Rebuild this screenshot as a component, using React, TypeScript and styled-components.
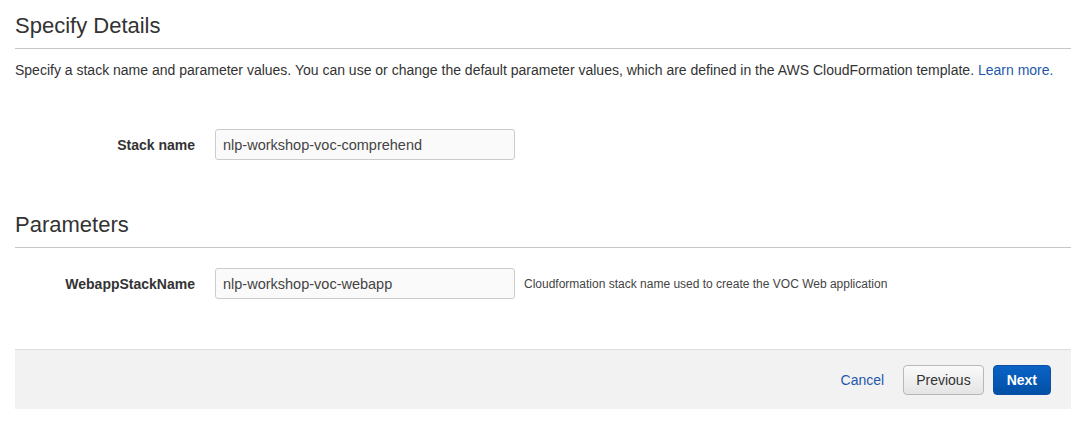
import React from "react";
import styled, { createGlobalStyle } from "styled-components";

const Global = createGlobalStyle`
  html, body { margin: 0; padding: 0; background: #fff; }
  body { font-family: "Liberation Sans", Arial, Helvetica, sans-serif; color: #333; }
`;

const Page = styled.div`
  padding: 0 14px 0 15px;
  display: flex;
  flex-direction: column;
`;

const SectionTitle = styled.h2<{ $top: number }>`
  margin: ${(p) => p.$top}px 0 0;
  padding: 0 0 9px;
  font-size: 22px;
  line-height: 26px;
  font-weight: normal;
  color: #333;
  border-bottom: 1px solid #c6c6c6;
`;

const Description = styled.p`
  margin: 12px 0 0;
  font-size: 14px;
  line-height: 18px;
  color: #333;
`;

const Link = styled.a`
  color: #1f58ad;
  text-decoration: none;
  cursor: pointer;
`;

const FieldRow = styled.div<{ $top: number }>`
  display: flex;
  align-items: center;
  margin-top: ${(p) => p.$top}px;
`;

const Label = styled.label`
  width: 180px;
  padding-right: 20px;
  text-align: right;
  font-size: 14px;
  font-weight: bold;
  color: #333;
`;

const Input = styled.input`
  box-sizing: border-box;
  width: 300px;
  height: 31px;
  padding: 0 7px;
  border: 1px solid #ccc;
  border-radius: 3px;
  background: #fafafa;
  font-family: "Liberation Sans", Arial, sans-serif;
  font-size: 14.5px;
  color: #444;
  outline: none;
`;

const Help = styled.span`
  margin-left: 9px;
  font-size: 12px;
  color: #444;
`;

const Footer = styled.div`
  margin-top: 50px;
  height: 59px;
  border-top: 1px solid #ddd;
  background: #f2f2f2;
  display: flex;
  align-items: center;
  justify-content: flex-end;
  padding-right: 20px;
`;

const CancelLink = styled(Link)`
  font-size: 14px;
  margin-right: 19px;
`;

const Button = styled.button<{ $primary?: boolean }>`
  box-sizing: border-box;
  height: 30px;
  padding: 0 ${(p) => (p.$primary ? "13px" : "12px")};
  margin-left: ${(p) => (p.$primary ? "9px" : "0")};
  border-radius: 4px;
  font-family: "Liberation Sans", Arial, sans-serif;
  font-size: 14px;
  font-weight: ${(p) => (p.$primary ? "bold" : "normal")};
  color: ${(p) => (p.$primary ? "#fff" : "#333")};
  border: 1px solid ${(p) => (p.$primary ? "#0a4fa3" : "#b8b8b8")};
  background: ${(p) =>
    p.$primary
      ? "linear-gradient(#0b63c6, #0250a6)"
      : "linear-gradient(#fafafa, #e4e4e4)"};
  cursor: pointer;
`;

export default function App() {
  return (
    <>
      <Global />
      <Page>
        <SectionTitle $top={13}>Specify Details</SectionTitle>
        <Description>
          Specify a stack name and parameter values. You can use or change the default parameter
          values, which are defined in the AWS CloudFormation template. <Link>Learn more.</Link>
        </Description>
        <FieldRow $top={50}>
          <Label>Stack name</Label>
          <Input defaultValue="nlp-workshop-voc-comprehend" />
        </FieldRow>
        <SectionTitle $top={52}>Parameters</SectionTitle>
        <FieldRow $top={20}>
          <Label>WebappStackName</Label>
          <Input defaultValue="nlp-workshop-voc-webapp" />
          <Help>Cloudformation stack name used to create the VOC Web application</Help>
        </FieldRow>
        <Footer>
          <CancelLink>Cancel</CancelLink>
          <Button>Previous</Button>
          <Button $primary>Next</Button>
        </Footer>
      </Page>
    </>
  );
}
